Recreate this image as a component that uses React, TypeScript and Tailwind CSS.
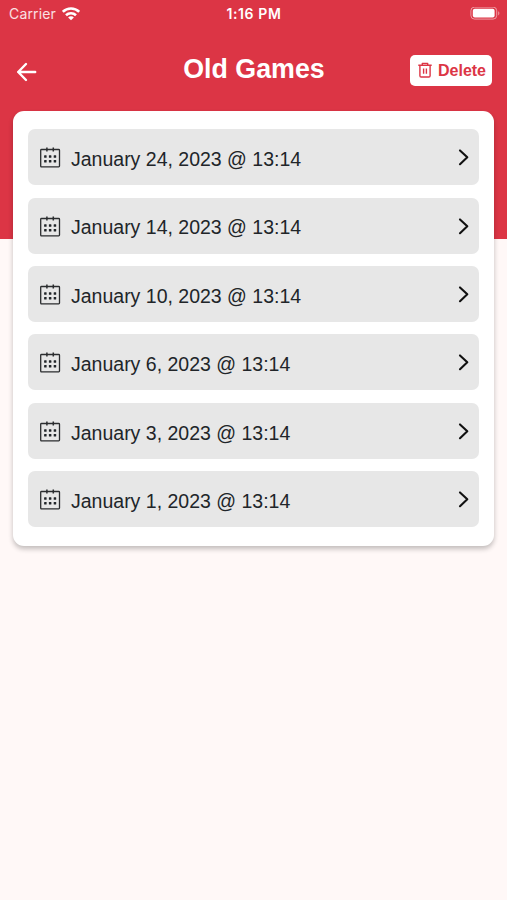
const games = [
  'January 24, 2023 @ 13:14',
  'January 14, 2023 @ 13:14',
  'January 10, 2023 @ 13:14',
  'January 6, 2023 @ 13:14',
  'January 3, 2023 @ 13:14',
  'January 1, 2023 @ 13:14',
];

function WifiIcon() {
  return (
    <svg className="ml-[6px] h-[14px] w-[18px]" viewBox="0 0 18 14" fill="none" stroke="#fff" strokeWidth="2.6">
      <path d="M0.8 4.8C5.3 0.3 12.7 0.3 17.2 4.8" />
      <path d="M4 8.2C6.8 5.5 11.2 5.5 14 8.2" />
      <path d="M9 13.2 6.1 10.4C7.7 8.9 10.3 8.9 11.9 10.4Z" fill="#fff" stroke="none" />
    </svg>
  );
}

function BatteryIcon() {
  return (
    <svg className="h-[14px] w-[30px]" viewBox="0 0 30 14" fill="none">
      <rect x="0.9" y="0.1" width="25.8" height="12" rx="3.6" stroke="#fff" strokeOpacity="0.5" />
      <rect x="2.8" y="1.8" width="21.8" height="8.8" rx="2" fill="#fff" />
      <path d="M28.2 4.2C29.8 4.8 29.8 7.8 28.2 8.4Z" fill="#fff" fillOpacity="0.5" />
    </svg>
  );
}

function BackIcon() {
  return (
    <svg className="h-5 w-[22px]" viewBox="0 0 22 20" fill="none" stroke="#fff" strokeWidth="2.4" strokeLinecap="round" strokeLinejoin="round">
      <path d="M10 2 2.2 10l7.8 8M2.2 10h17" />
    </svg>
  );
}

function TrashIcon() {
  return (
    <svg className="h-4 w-[14px]" viewBox="0 0 14 16" fill="none" stroke="#dc3545" strokeWidth="1.4" strokeLinejoin="round">
      <path d="M0.3 3.2h13.4M4.3 3V1.4h5.4V3M1.9 3.4v10.4q0 1.2 1.2 1.2h7.8q1.2 0 1.2-1.2V3.4M5.6 6.4v5.4M8.4 6.4v5.4" />
    </svg>
  );
}

function CalendarIcon() {
  return (
    <svg className="h-[22px] w-[22px] shrink-0" viewBox="0 0 22 22" fill="none">
      <rect x="1.7" y="3.5" width="18.8" height="17.4" rx="0.8" stroke="#2b2d2f" strokeWidth="1.3" />
      <path d="M7.9 1.6v4M14.3 1.6v4" stroke="#2b2d2f" strokeWidth="1.5" />
      <g fill="#212529">
        {[5.1, 9.9, 14.7].map((x) =>
          [9.2, 13.9].map((y) => <rect key={`${x}-${y}`} x={x} y={y} width="2.5" height="2.5" rx="0.5" />),
        )}
      </g>
    </svg>
  );
}

function ChevronIcon() {
  return (
    <svg className="h-[18px] w-3 shrink-0" viewBox="0 0 12 18" fill="none" stroke="#111" strokeWidth="2.1" strokeLinecap="round" strokeLinejoin="round">
      <path d="M3 2.4l7.3 6.9L3 16.2" />
    </svg>
  );
}

export default function App() {
  return (
    <div className="h-[900px] w-full overflow-hidden bg-[linear-gradient(to_bottom,#dc3545_239px,#fff8f7_239px)] font-['Liberation_Sans',sans-serif]">
      <div className="grid h-7 grid-cols-3 items-center pr-[7px] pl-[9px] font-['Inter',sans-serif] text-sm text-white">
        <div className="flex items-center">
          <span className="text-[14px] tracking-[0.15px] text-white/85">Carrier</span>
          <WifiIcon />
        </div>
        <span className="pr-[1px] text-center text-[14px] font-semibold tracking-[0.6px]">1:16 PM</span>
        <div className="flex justify-end">
          <BatteryIcon />
        </div>
      </div>
      <header className="grid h-[83px] grid-cols-[1fr_auto_1fr] items-center pr-[15px] pl-4">
        <div className="pt-[5px]">
          <BackIcon />
        </div>
        <h1 className="pb-[2px] text-[26.8px] leading-8 font-bold text-white">Old Games</h1>
        <div className="flex justify-end pt-[1px]">
          <button className="flex h-[31px] w-[82px] items-center justify-center gap-[6px] rounded-[5px] bg-white pl-[2px] text-base font-bold text-[#dc3545]">
            <TrashIcon />
            <span className="pt-[2px]">Delete</span>
          </button>
        </div>
      </header>
      <main className="mx-[13px] flex h-[435px] flex-col gap-[12.4px] rounded-[11px] bg-white px-[15px] pt-[18.2px] shadow-[0_3px_5px_rgba(0,0,0,0.24)]">
        {games.map((game) => (
          <div key={game} className="flex h-14 shrink-0 items-center rounded-[7px] bg-[#e7e7e7] pr-[10px] pl-[11px]">
            <CalendarIcon />
            <span className="ml-[10px] flex-1 pt-[3.5px] text-[19.5px] leading-7 text-[#212529]">{game}</span>
            <ChevronIcon />
          </div>
        ))}
      </main>
    </div>
  );
}
